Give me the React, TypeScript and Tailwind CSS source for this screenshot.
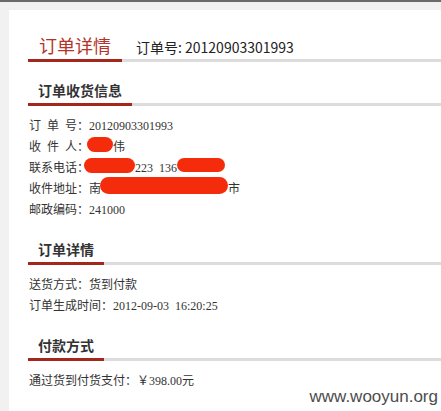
const sans = "font-['Noto_Sans_CJK_SC',sans-serif]";
const serif = "font-['Liberation_Serif','Noto_Sans_CJK_SC',serif]";

function Section({ title }: { title: string }) {
  return (
    <div className="mt-4 border-b-[3px] border-[#dcdcdc]">
      <span
        className={`${sans} -mb-[3px] inline-block border-b-[3px] border-[#a4271c] px-[10px] pb-[3px] text-[14px] leading-[20px] font-bold text-[#333]`}
      >
        {title}
      </span>
    </div>
  );
}

function Blob({ className }: { className: string }) {
  return <span className={`relative inline-block rounded-full bg-[#f42c0c] align-top ${className}`} />;
}

export default function App() {
  return (
    <div className="relative h-[411px] w-[441px] overflow-hidden bg-[#f1f1f1]">
      <div className="h-[2px] bg-[#6a6a6a]" />
      <div className="mt-2 ml-[9px] bg-white pt-[23px] pl-[19px]">
        {/* title row */}
        <div className="flex items-baseline border-b-[3px] border-[#dcdcdc]">
          <span
            className={`${sans} -mb-[3px] border-b-[3px] border-[#a4271c] px-[11px] pb-[2px] text-[18px] leading-[24px] text-[#b3342a]`}
          >
            订单详情
          </span>
          <span className={`${sans} ml-[14px] text-[14px] leading-[20px] text-[#222]`}>
            订单号: 20120903301993
          </span>
        </div>

        <Section title="订单收货信息" />
        <div className={`${serif} mt-[10px] pl-px text-[12px] leading-[21px] text-[#333]`}>
          <div>订&#8194;单&#8194;号：20120903301993</div>
          <div>
            收&#8194;件&#8194;人：
            <Blob className="-ml-[2px] h-[15px] w-[26px]" />
            伟
          </div>
          <div>
            联系电话：
            <Blob className="-ml-[5px] h-[15px] w-[51px]" />
            223&#8194;136
            <Blob className="h-[14px] w-[48px]" />
          </div>
          <div>
            收件地址：南
            <Blob className="-top-[2px] -ml-px h-[17px] w-[128px]" />
            市
          </div>
          <div>邮政编码：241000</div>
        </div>

        <Section title="订单详情" />
        <div className={`${serif} mt-[10px] pl-px text-[12px] leading-[21px] text-[#333]`}>
          <div>送货方式：货到付款</div>
          <div>订单生成时间：2012-09-03&#8194;16:20:25</div>
        </div>

        <Section title="付款方式" />
        <div className={`${serif} mt-[10px] pl-px text-[12px] leading-[21px] text-[#333]`}>
          <div>通过货到付货支付：￥398.00元</div>
        </div>

        <Section title="商品清单" />
        <div className="h-10" />
      </div>

      <div className="absolute top-[388px] right-[3px] font-['Liberation_Sans',sans-serif] text-[17px] leading-none text-[#4d4d4d]">
        www.wooyun.org
      </div>
    </div>
  );
}
